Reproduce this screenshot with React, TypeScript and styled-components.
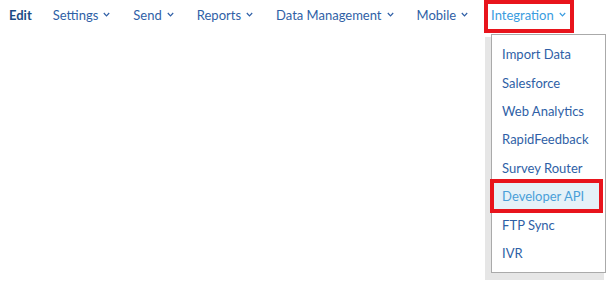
import styled, { createGlobalStyle } from "styled-components";

const Global = createGlobalStyle`
  html, body, #root {
    margin: 0;
    min-height: 100%;
    height: 100%;
    background: #ffffff;
    font-family: "Lato", "Open Sans", sans-serif;
  }
`;

const Page = styled.div`
  min-height: 100vh;
  background: #ffffff;
`;

const Nav = styled.nav`
  display: flex;
  align-items: center;
  height: 29px;
  padding-left: 9px;
`;

const Item = styled.div<{ $active?: boolean; $marked?: boolean }>`
  position: relative;
  display: flex;
  align-items: center;
  gap: 5px;
  box-sizing: border-box;
  margin-right: 23px;
  font-size: 13px;
  color: ${(p) => (p.$active ? "#3a9ce0" : "#2f5fa6")};
  cursor: pointer;
  white-space: nowrap;

  ${(p) =>
    p.$marked &&
    `
    align-self: flex-start;
    height: 33px;
    margin-left: -7px;
    margin-right: 0;
    padding: 0 4px 4px 3px;
    border: 4px solid #e8141c;
  `}
`;

const EditLabel = styled.span`
  font-weight: 700;
  color: #1c4c86;
  font-size: 13px;
  margin-right: 21px;
`;

const Chevron = () => (
  <svg width="7" height="5" viewBox="0 0 7 5">
    <path d="M0.8 1 L3.5 3.8 L6.2 1" fill="none" stroke="currentColor" strokeWidth="1.2" />
  </svg>
);

const Menu = styled.ul`
  position: absolute;
  top: 30px;
  left: 3px;
  width: 113px;
  margin: 0;
  padding: 5px 0;
  list-style: none;
  background: #ffffff;
  border: 1px solid #aaaaaa;
  box-shadow: -4px 5px 0 2px #e6e6e6;
  cursor: default;
`;

const MenuItem = styled.li<{ $marked?: boolean }>`
  display: flex;
  align-items: center;
  height: 28.4px;
  padding-left: 10px;
  font-size: 13px;
  color: #2f5fa6;

  ${(p) =>
    p.$marked &&
    `
    margin: 0 5px 0 1px;
    padding-left: 9px;
    color: #4a9fd8;
    background: #e5f1f8;
    outline: 4px solid #e8141c;
    outline-offset: -1px;
  `}
`;

const navItems = ["Settings", "Send", "Reports", "Data Management", "Mobile"];
const menuItems = [
  "Import Data",
  "Salesforce",
  "Web Analytics",
  "RapidFeedback",
  "Survey Router",
  "Developer API",
  "FTP Sync",
  "IVR",
];

export default function App() {
  return (
    <Page>
      <Global />
      <Nav>
        <EditLabel>Edit</EditLabel>
        {navItems.map((n) => (
          <Item key={n}>
            {n}
            <Chevron />
          </Item>
        ))}
        <Item $active $marked>
          Integration
          <Chevron />
          <Menu>
            {menuItems.map((m) => (
              <MenuItem key={m} $marked={m === "Developer API"}>
                {m}
              </MenuItem>
            ))}
          </Menu>
        </Item>
      </Nav>
    </Page>
  );
}
